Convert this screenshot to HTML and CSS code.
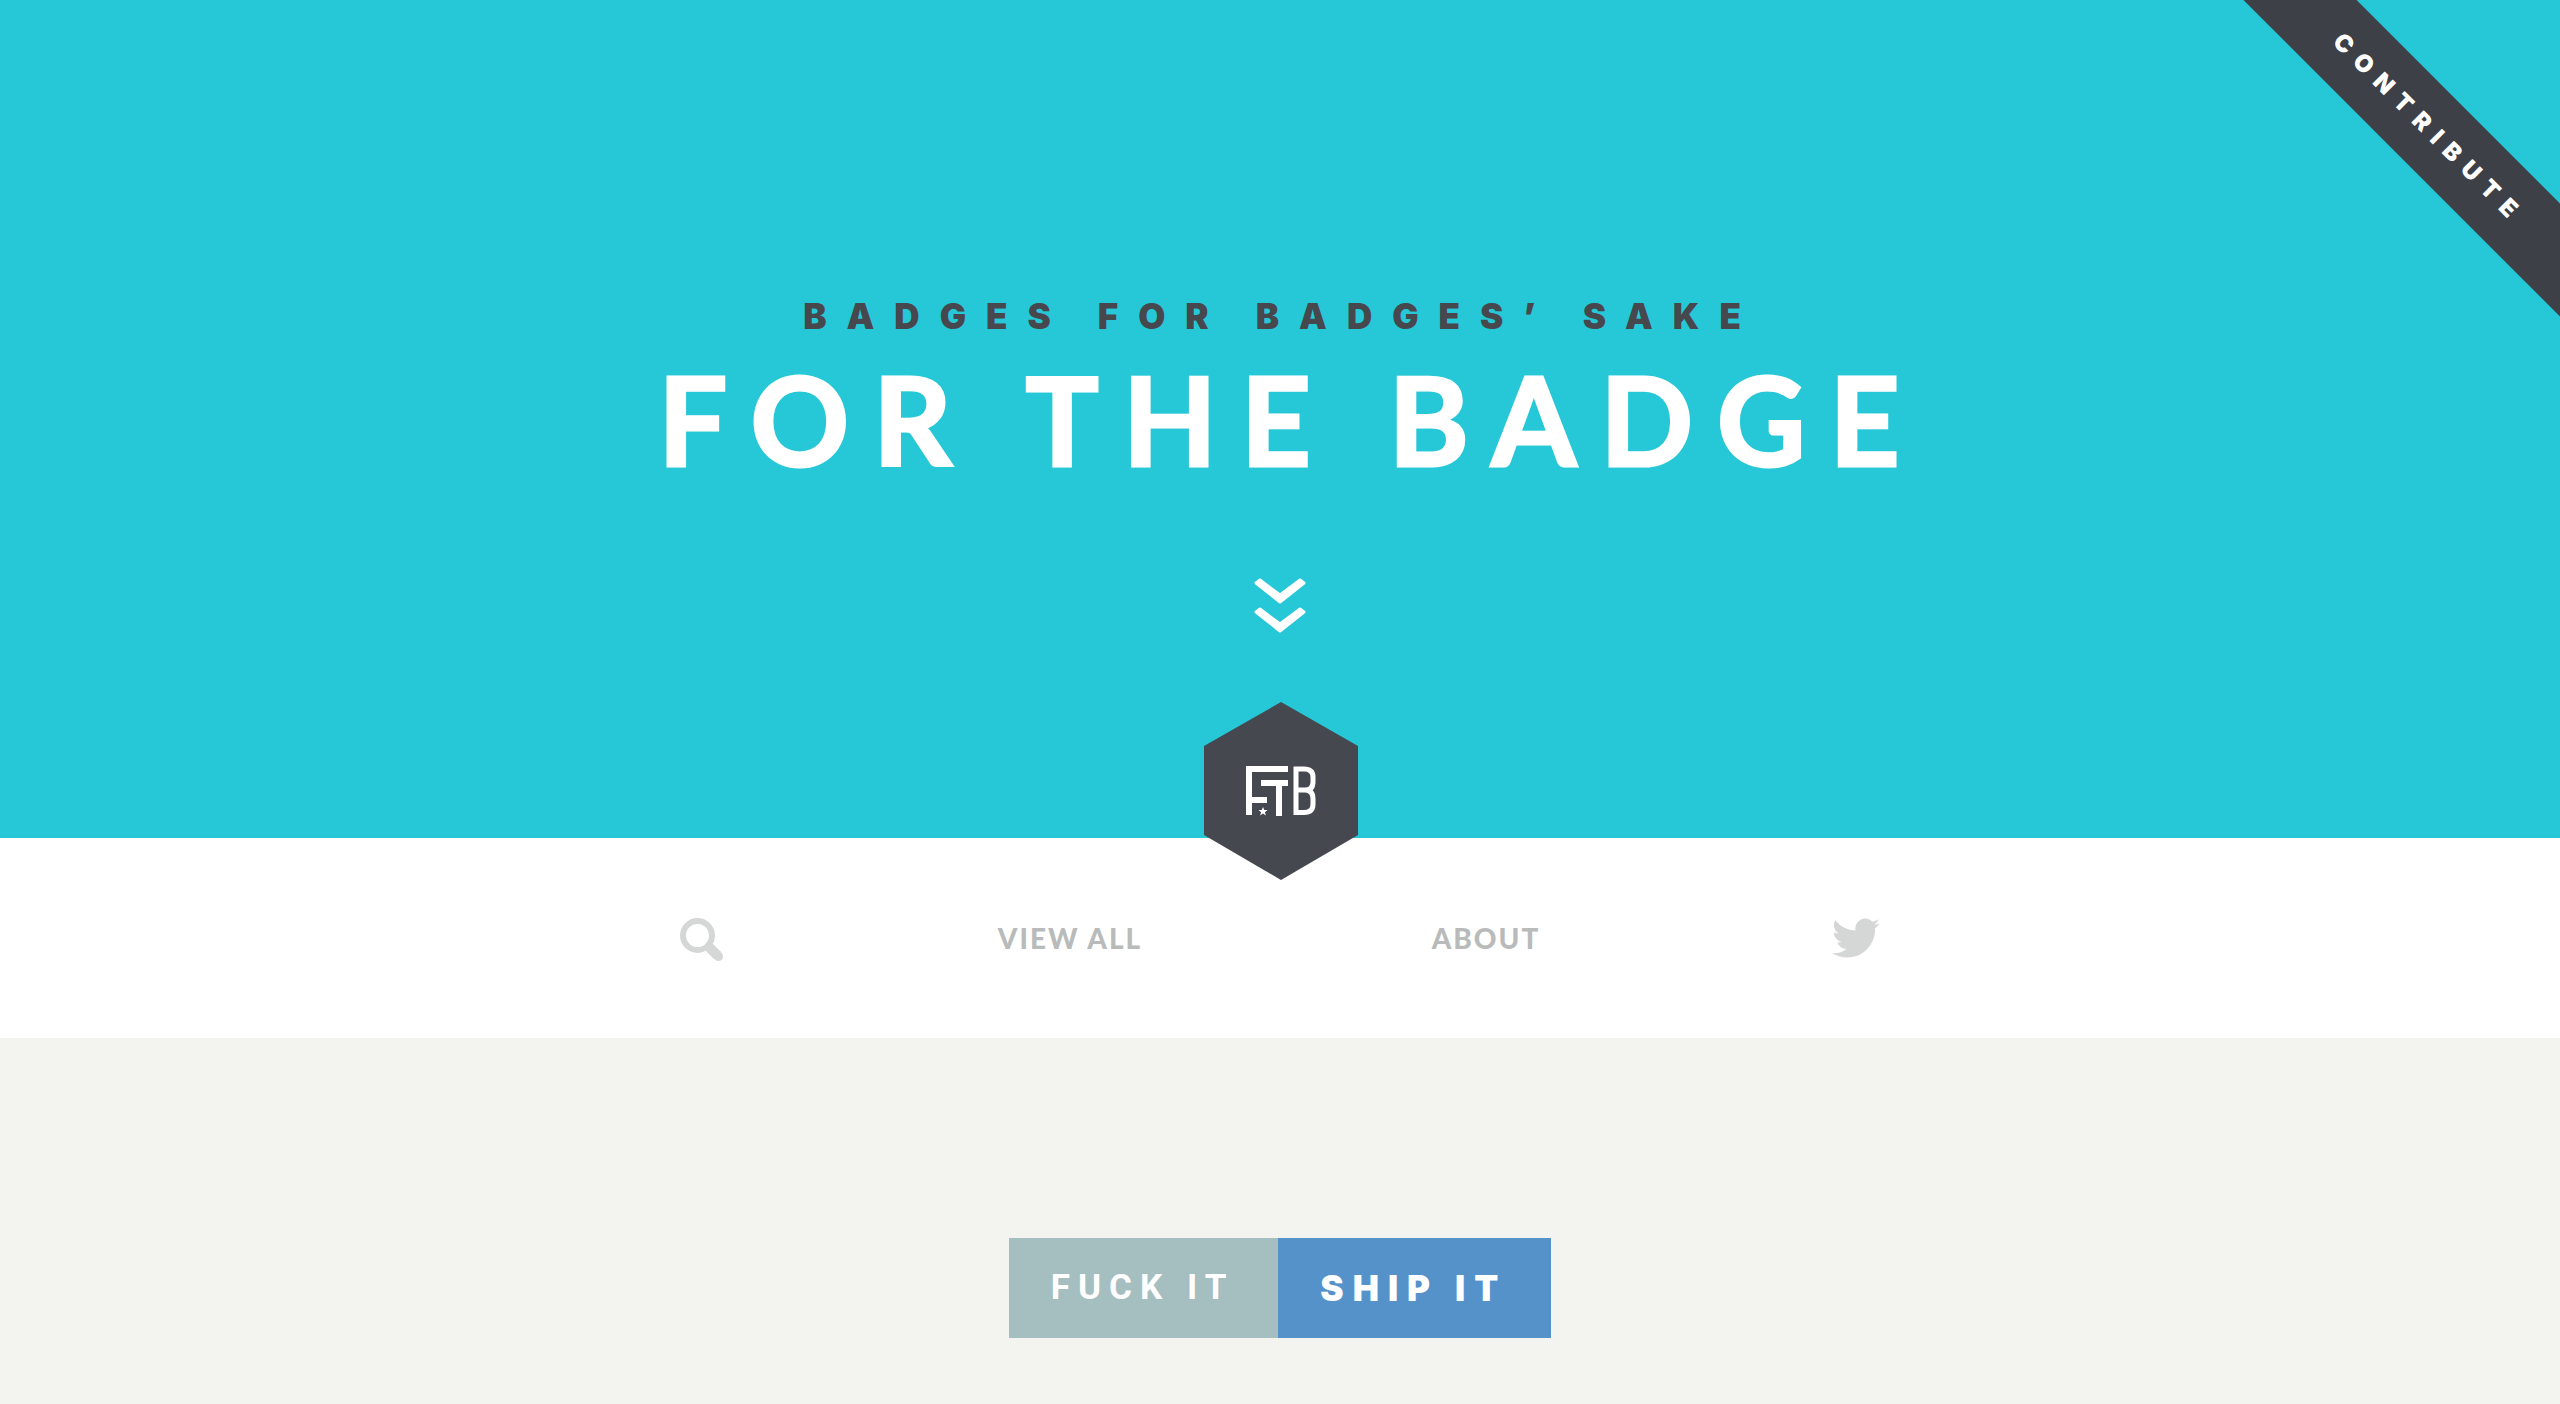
FILE: index.html
```html
<!DOCTYPE html>
<html lang="en">
<head>
<meta charset="utf-8">
<meta name="viewport" content="width=device-width, initial-scale=1">
<title>For the Badge</title>
<link rel="stylesheet" href="styles.css">
</head>
<body>
<header class="hero">
  <a class="ribbon" href="#contribute">Contribute</a>
  <p class="tagline">Badges for badges’ sake</p>
  <h1 class="title">For the Badge</h1>
  <a class="scroll-down" href="#badges" aria-label="Scroll down">
    <svg width="52" height="56" viewBox="0 0 52 56" fill="#fff" stroke="#fff" stroke-width="3" stroke-linejoin="round">
      <path d="M2 5 6 2 26 17 46 2 50 5 26 24z"/>
      <path d="M2 34 6 31 26 46 46 31 50 34 26 53z"/>
    </svg>
  </a>
  <a class="logo" href="#top" aria-label="FTB">
    <svg width="154" height="178" viewBox="0 0 154 178">
      <path fill="#45484f" d="M77 0 154 44V133L77 178 0 133V44Z"/>
      <g fill="none" stroke="#fff" stroke-width="6">
        <path d="M45 113V67H84M45 98H63M57 81H84M75 81V114"/>
        <path d="M92 67H100Q109 67 109 75V80Q109 88 101 88H92M101 88Q109 88 109 97V102Q109 110.500 100 110.500H92M92 64.500V113" stroke-width="5"/>
      </g>
      <path fill="#fff" d="m59 105 1.300 3H63.500l-2.600 2.200 1 3.300-2.900-2-2.900 2 1-3.300-2.600-2.200h3.200z"/>
    </svg>
  </a>
</header>
<nav class="nav" aria-label="Main">
  <div class="nav-inner">
    <button class="nav-item" type="button" aria-label="Search">
      <svg width="44" height="48" viewBox="0 0 44 48" fill="none" stroke="#d5d7d7">
        <circle cx="17.500" cy="21.500" r="14.500" stroke-width="6"/>
        <path d="M27 31 37.500 41.500" stroke-width="10"/>
        <path d="M36.500 40.500 38.500 42.500" stroke-width="9" stroke-linecap="round"/>
      </svg>
    </button>
    <a class="nav-item" href="#all">View all</a>
    <a class="nav-item" href="#about">About</a>
    <a class="nav-item" href="#twitter" aria-label="Twitter">
      <svg width="48" height="40" viewBox="0 0 24 20" fill="#d5d7d7">
        <path d="M23.950 2.570a10 10 0 0 1-2.820.780 4.960 4.960 0 0 0 2.160-2.730 9.900 9.900 0 0 1-3.120 1.200 4.920 4.920 0 0 0-8.390 4.480A13.940 13.940 0 0 1 1.640 1.160a4.920 4.920 0 0 0 1.530 6.570 4.900 4.900 0 0 1-2.230-.610v.060a4.920 4.920 0 0 0 3.950 4.830 5 5 0 0 1-2.210.080 4.940 4.940 0 0 0 4.600 3.420A9.870 9.870 0 0 1 0 17.550a13.990 13.990 0 0 0 7.560 2.210c9.050 0 14-7.500 14-13.980l-.020-.640a9.940 9.940 0 0 0 2.410-2.570z"/>
      </svg>
    </a>
  </div>
</nav>
<main class="badges" id="badges">
  <a class="badge" href="#ship-it">
    <span class="badge-label">Fuck it</span>
    <span class="badge-value">Ship it</span>
  </a>
</main>
</body>
</html>
```
FILE: styles.css
```css
* {
  box-sizing: border-box;
}

body {
  margin: 0;
  min-height: 100vh;
  background: #f3f4ef;
  font-family: Lato, "Liberation Sans", sans-serif;
  text-transform: uppercase;
}

a {
  color: inherit;
  text-decoration: none;
}

svg {
  display: block;
}

.hero {
  position: relative;
  display: flex;
  flex-direction: column;
  align-items: center;
  height: 838px;
  padding-top: 296px;
  overflow-x: clip;
  background: #26c8d7;
  color: #fff;
}

.ribbon {
  position: absolute;
  top: 86px;
  right: -126px;
  width: 520px;
  padding-left: 8px;
  background: #3d4047;
  font-family: Inter, sans-serif;
  font-size: 24px;
  font-weight: 900;
  line-height: 80px;
  letter-spacing: 10px;
  text-align: center;
  transform: rotate(45deg);
}

.tagline {
  margin: 0;
  padding-left: 4px;
  color: #46484d;
  font-family: Inter, sans-serif;
  font-size: 35px;
  font-weight: 900;
  line-height: 40px;
  letter-spacing: 20px;
}

.title {
  margin: 8px 0 0;
  padding-left: 22px;
  font-size: 122px;
  font-weight: 700;
  line-height: 150px;
  letter-spacing: 24px;
  -webkit-text-stroke: 3px #fff;
}

.scroll-down {
  margin-top: 84px;
}

.logo {
  position: absolute;
  bottom: -42px;
  left: calc(50% - 76px);
}

.nav {
  background: #fff;
}

.nav-inner {
  display: grid;
  grid-template-columns: 320fr 416fr 416fr 324fr;
  place-items: center;
  max-width: 1476px;
  height: 200px;
  margin: 0 auto;
}

.nav-item {
  padding: 0;
  border: 0;
  background: none;
  color: #b9bbbb;
  font-size: 28px;
  font-weight: 900;
  line-height: 40px;
  letter-spacing: 2px;
  cursor: pointer;
}

.badges {
  display: flex;
  justify-content: center;
  padding: 200px 0 66px;
}

.badge {
  display: flex;
  color: #fff;
  font-size: 35px;
  line-height: 100px;
}

.badge-label,
.badge-value {
  padding: 0 44px 0 42px;
}

.badge-label {
  background: #a5bebf;
  font-family: Roboto, sans-serif;
  font-weight: 700;
  letter-spacing: 8px;
}

.badge-value {
  background: #5592ca;
  font-family: Inter, sans-serif;
  font-weight: 900;
  letter-spacing: 9px;
}
```
